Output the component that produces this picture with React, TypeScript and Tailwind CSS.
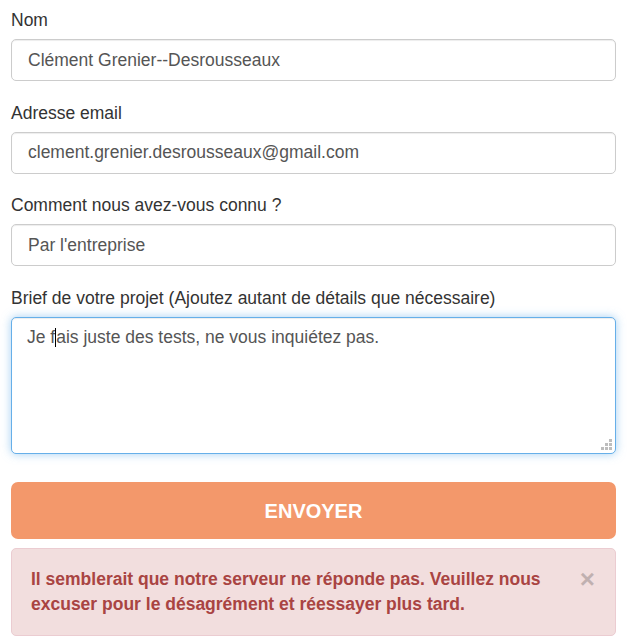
import React from "react";

const inputCls =
  "block w-full h-[42px] px-[16px] flex items-center border border-[#cccccc] rounded-[5px] bg-white text-[#555555] text-[17.5px] leading-[25px] shadow-[inset_0_1px_1px_rgba(0,0,0,0.075)]";

const labelCls = "block text-[#333333] text-[17.5px] leading-[25px] mb-[6px]";

export default function App() {
  return (
    <div
      className="w-[627px] h-[644px] bg-white px-[11px] pt-[8px]"
      style={{ fontFamily: '"Liberation Sans", Arial, Helvetica, sans-serif' }}
    >
      <div className="mb-[19.5px]">
        <label className={labelCls}>Nom</label>
        <div className={inputCls}>Clément Grenier--Desrousseaux</div>
      </div>
      <div className="mb-[19.5px]">
        <label className={labelCls}>Adresse email</label>
        <div className={inputCls}>clement.grenier.desrousseaux@gmail.com</div>
      </div>
      <div className="mb-[19.5px]">
        <label className={labelCls}>Comment nous avez-vous connu ?</label>
        <div className={inputCls}>Par l'entreprise</div>
      </div>
      <div className="mb-[28.5px]">
        <label className={labelCls}>
          Brief de votre projet (Ajoutez autant de détails que nécessaire)
        </label>
        <div className="relative w-full h-[137px] px-[15px] pt-[7px] border border-[#66afe9] rounded-[5px] bg-white text-[#555555] text-[17.5px] leading-[25px] shadow-[inset_0_1px_1px_rgba(0,0,0,0.075),0_0_10px_rgba(102,175,233,0.6)]">
          <span>Je f</span>
          <span className="inline-block w-px h-[19px] bg-black align-[-4px]" />
          <span>ais juste des tests, ne vous inquiétez pas.</span>
          <svg
            className="absolute right-[2px] bottom-[2px]"
            width="12"
            height="12"
            viewBox="0 0 12 12"
          >
            <rect x="8" y="0" width="3" height="3" fill="#bdbdbd" />
            <rect x="4" y="4" width="3" height="3" fill="#bdbdbd" />
            <rect x="8" y="4" width="3" height="3" fill="#bdbdbd" />
            <rect x="0" y="8" width="3" height="3" fill="#bdbdbd" />
            <rect x="4" y="8" width="3" height="3" fill="#bdbdbd" />
            <rect x="8" y="8" width="3" height="3" fill="#bdbdbd" />
          </svg>
        </div>
      </div>
      <button className="w-full h-[57px] rounded-[7px] bg-[#f3986b] text-white text-[20px] font-bold flex items-center justify-center">
        ENVOYER
      </button>
      <div className="mt-[9px] w-full h-[88px] flex items-start border border-[#ebccd1] rounded-[5px] bg-[#f2dede] pl-[19px] pr-[20px] pt-[18px]">
        <div className="w-[520px] text-[#a94442] text-[17.5px] leading-[25px] font-bold">
          Il semblerait que notre serveur ne réponde pas. Veuillez nous excuser
          pour le désagrément et réessayer plus tard.
        </div>
        <div className="ml-auto text-[26px] leading-[25px] font-bold text-black opacity-20">
          ×
        </div>
      </div>
    </div>
  );
}
